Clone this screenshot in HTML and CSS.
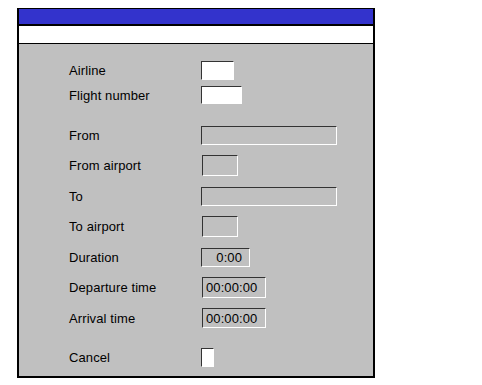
FILE: index.html
```html
<!DOCTYPE html>
<html>
<head>
<meta name="viewport" content="width=device-width, initial-scale=1.0">
<link rel="stylesheet" href="styles.css">
</head>
<body>
<div class="frame">
	<div class="titlebar"></div>
	<div class="menubar"></div>
	<div class="form">
		<div class="group tight">
			<div class="row"><span class="label">Airline</span><span class="field white airline"></span></div>
			<div class="row"><span class="label">Flight number</span><span class="field white flight"></span></div>
		</div>
		<div class="group">
			<div class="row"><span class="label">From</span><span class="field wide"></span></div>
			<div class="row"><span class="label">From airport</span><span class="field code shift"></span></div>
			<div class="row"><span class="label">To</span><span class="field wide"></span></div>
			<div class="row"><span class="label">To airport</span><span class="field code shift"></span></div>
			<div class="row"><span class="label">Duration</span><span class="field duration">0:00</span></div>
			<div class="row"><span class="label">Departure time</span><span class="field time shift">00:00:00</span></div>
			<div class="row"><span class="label">Arrival time</span><span class="field time shift arrival">00:00:00</span></div>
		</div>
		<div class="group last">
			<div class="row"><span class="label">Cancel</span><span class="field white check"></span></div>
		</div>
	</div>
</div>
</body>
</html>
```

FILE: styles.css
```css
* {
	box-sizing: border-box;
}
body {
	margin: 8px 0 0 17px;
	font-family: "Liberation Sans", Arial, sans-serif;
	font-size: 13px;
	letter-spacing: 0.1px;
	color: #000;
	background: #fff;
}
.frame {
	width: 358px;
	border: 2px solid #000;
	border-top-width: 1px;
}
.titlebar {
	height: 17px;
	background: #3333cc;
	border-bottom: 2px solid #000;
}
.menubar {
	height: 18px;
	background: #fff;
	border-bottom: 1px solid #000;
}
.form {
	background: #c0c0c0;
	padding: 16px 0 9px 50px;
}
.group {
	display: flex;
	flex-direction: column;
	gap: 10.5px;
	margin-bottom: 19px;
}
.group.tight {
	gap: 5px;
	margin-bottom: 20px;
}
.group.last {
	margin-bottom: 0;
}
.row {
	display: flex;
	align-items: center;
	height: 20px;
}
.label {
	width: 132px;
}
.field {
	display: flex;
	align-items: center;
	height: 19px;
	padding-left: 3px;
	background: #c0c0c0;
	border-top: 1px solid #333;
	border-left: 1px solid #333;
	border-right: 1px solid #fff;
	border-bottom: 1px solid #fff;
}
.field.white {
	background: #fff;
}
.shift {
	margin-left: 1px;
}
.airline { width: 33px; }
.flight { width: 41px; height: 18px; }
.wide { width: 136px; }
.code { width: 36px; height: 21px; }
.duration {
	width: 49px;
	justify-content: flex-end;
	padding-right: 7px;
}
.time { width: 64px; height: 21px; }
.time.arrival { height: 20px; }
.check { width: 13px; }
```
